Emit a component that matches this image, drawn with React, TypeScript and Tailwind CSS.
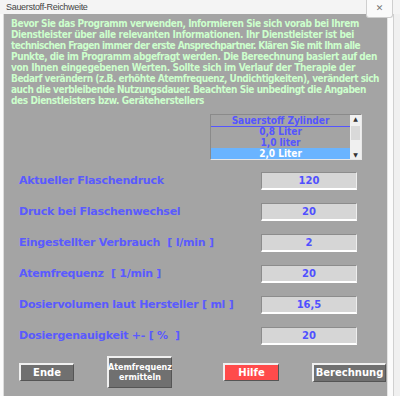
import React, { useLayoutEffect, useRef, useState } from "react";

const labels = [
  { t: "Aktueller Flaschendruck", v: "120" },
  { t: "Druck bei Flaschenwechsel", v: "20" },
  { t: "Eingestellter Verbrauch  [ l/min ]", v: "2" },
  { t: "Atemfrequenz  [ 1/min ]", v: "20" },
  { t: "Dosiervolumen laut Hersteller [ ml ]", v: "16,5" },
  { t: "Dosiergenauigkeit +- [ %  ]", v: "20" },
];

const intro: { t: string; w: number }[] = [
  { t: "Bevor Sie das Programm verwenden, Informieren Sie sich vorab bei Ihrem", w: 348 },
  { t: "Dienstleister über alle relevanten Informationen. Ihr Dienstleister ist bei", w: 343 },
  { t: "technischen Fragen immer der erste Ansprechpartner. Klären Sie mit Ihm alle", w: 349 },
  { t: "Punkte, die im Programm abgefragt werden. Die Bereechnung basiert auf den", w: 366 },
  { t: "von Ihnen eingegebenen Werten. Sollte sich im Verlauf der Therapie der", w: 344 },
  { t: "Bedarf verändern (z.B. erhöhte Atemfrequenz, Undichtigkeiten), verändert sich", w: 368 },
  { t: "auch die verbleibende Nutzungsdauer. Beachten Sie unbedingt die Angaben", w: 355 },
  { t: "des Dienstleisters bzw. Geräteherstellers", w: 193 },
];

function FitLine({ text, width }: { text: string; width: number }) {
  const ref = useRef<HTMLSpanElement>(null);
  const [ls, setLs] = useState(0);
  useLayoutEffect(() => {
    const el = ref.current;
    if (!el) return;
    el.style.letterSpacing = "0px";
    const natural = el.getBoundingClientRect().width;
    setLs((width - natural) / text.length);
  }, [text, width]);
  return (
    <div className="h-[11px]">
      <span ref={ref} className="inline-block whitespace-pre" style={{ letterSpacing: `${ls}px` }}>
        {text}
      </span>
    </div>
  );
}

const btn =
  "bg-[#707070] border-t-2 border-l-2 border-[#f0f0f0] border-b border-r border-b-[#555] border-r-[#555] flex items-center justify-center font-bold text-white";

export default function App() {
  return (
    <div className="w-[400px] h-[396px] bg-[#f4f4f4] relative overflow-hidden" style={{ fontFamily: "'DejaVu Sans', Verdana, sans-serif" }}>
      <div className="h-[14px] pl-[6px] pt-[2px] text-[9px] leading-[10px] text-[#444] tracking-[-0.3px]" style={{ fontFamily: "'Liberation Sans', Arial, sans-serif" }}>
        Sauerstoff-Reichweite
      </div>
      <div className="absolute right-[7px] top-0 w-[27px] h-[18px] border border-[#cfcfcf] border-t-0 rounded-b-[3px] bg-[#fafafa] flex items-center justify-center text-[9px] text-[#777]">
        ✕
      </div>
      <div className="flex h-[382px]">
        <div className="w-[4px] bg-[#fbfbfb] border-r border-[#dcdcdc]" />
        <div className="w-[383px] bg-[#a4a4a4] flex flex-col">
          <div
            className="pl-[7px] pt-[4px] text-[10px] leading-[11px] font-bold text-[#ccffcc]"
            style={{ fontFamily: "'DejaVu Sans Condensed', 'DejaVu Sans', sans-serif", fontStretch: "condensed" }}
          >
            {intro.map((l) => (
              <FitLine key={l.t} text={l.t} width={l.w} />
            ))}
          </div>
          <div className="ml-[206px] mt-[8px] w-[152px] h-[46px] border border-[#e8e8e8] border-t-[#8a8a8a] border-l-[#8a8a8a] flex">
            <div className="flex-1 flex flex-col text-[10px] leading-[11px] font-bold text-[#5555ff] text-center" style={{ fontFamily: "'DejaVu Sans Condensed', 'DejaVu Sans', sans-serif", fontStretch: "condensed" }}>
              <div className="h-[12px] border-b border-[#5555ff]">Sauerstoff Zylinder</div>
              <div className="h-[10px] leading-[10px]">0,8 Liter</div>
              <div className="h-[11px]">1,0 liter</div>
              <div className="h-[11px] bg-[#6ab4ff] text-white">2,0 Liter</div>
            </div>
            <div className="w-[11px] bg-[#f0f0f0] flex flex-col items-center justify-between text-[6px] leading-[8px] text-[#333]">
              <span>▲</span>
              <div className="w-[9px] h-[14px] bg-[#d9d9d9] -mt-[8px]" />
              <span>▼</span>
            </div>
          </div>
          <div className="flex flex-col mt-[12px] gap-[13px] pl-[15px]">
            {labels.map((l) => (
              <div key={l.t} className="flex items-center h-[18px]">
                <div className="w-[242px] text-[11px] font-bold text-[#5a5aff] whitespace-pre tracking-[-0.25px]">{l.t}</div>
                <div className="w-[96px] h-[18px] bg-[#d6d6d6] border-t border-l border-[#8c8c8c] border-b-2 border-r border-b-white border-r-[#eeeeee] flex items-center justify-center text-[10px] font-bold text-[#5050ff]">
                  {l.v}
                </div>
              </div>
            ))}
          </div>
          <div className="flex items-center mt-[11px] pl-[15px]">
            <div className={`w-[55px] h-[18px] text-[10px] ${btn}`}>Ende</div>
            <div className={`ml-[33px] w-[65px] h-[32px] flex-col text-[8px] leading-[10px] ${btn}`}>
              <span>Atemfrequenz</span>
              <span>ermitteln</span>
            </div>
            <div className={`ml-[51px] w-[56px] h-[18px] text-[10px] ${btn} bg-[#ff4b4b]`}>Hilfe</div>
            <div className={`ml-[33px] w-[74px] h-[19px] text-[10px] ${btn}`}>Berechnung</div>
          </div>
        </div>
        <div className="w-[6px] bg-[#fbfbfb] border-l border-[#e4e4e4]" />
        <div className="flex-1 bg-[#f0f0f0] border-l border-[#d0d0d0]" />
      </div>
    </div>
  );
}
